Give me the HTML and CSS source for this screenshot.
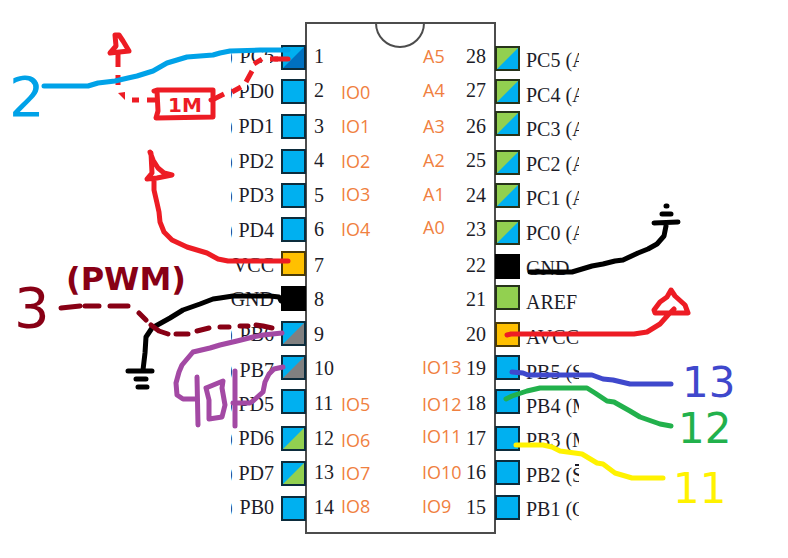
FILE: index.html
```html
<!DOCTYPE html>
<html lang="en">
<head>
<meta charset="utf-8">
<title>Chip pinout wiring</title>
<link rel="stylesheet" href="styles.css">
</head>
<body>
<main class="board">
<svg class="diagram" viewBox="0 0 788 558" role="img" aria-label="28-pin chip with wiring notes">
  <defs>
    <clipPath id="labels-clip"><rect x="231" y="20" width="348" height="520"/></clipPath>
  </defs>

  <!-- chip body -->
  <rect class="body" x="306" y="23" width="189" height="510"/>
  <path class="body" d="M376 23A24 24 0 0 0 424 23"/>

  <!-- pin fills: left column, then right column -->
  <g class="pins blue">
    <rect x="282" y="46" width="23" height="23"/>
    <rect x="282" y="80" width="23" height="23"/>
    <rect x="282" y="115" width="23" height="23"/>
    <rect x="282" y="150" width="23" height="23"/>
    <rect x="282" y="184" width="23" height="23"/>
    <rect x="282" y="218" width="23" height="23"/>
    <rect x="282" y="322" width="23" height="23"/>
    <rect x="282" y="356" width="23" height="23"/>
    <rect x="282" y="390" width="23" height="23"/>
    <rect x="282" y="427" width="23" height="23"/>
    <rect x="282" y="462" width="23" height="23"/>
    <rect x="282" y="497" width="23" height="23"/>
    <rect x="496" y="356" width="23" height="23"/>
    <rect x="496" y="390" width="23" height="23"/>
    <rect x="496" y="427" width="23" height="23"/>
    <rect x="496" y="461" width="23" height="23"/>
    <rect x="496" y="496" width="23" height="23"/>
  </g>
  <g class="pins green">
    <rect x="496" y="47" width="23" height="23"/>
    <rect x="496" y="80" width="23" height="23"/>
    <rect x="496" y="112" width="23" height="23"/>
    <rect x="496" y="151" width="23" height="23"/>
    <rect x="496" y="184" width="23" height="23"/>
    <rect x="496" y="221" width="23" height="23"/>
    <rect x="496" y="286" width="23" height="23"/>
  </g>
  <g class="pins amber">
    <rect x="282" y="252" width="23" height="23"/>
    <rect x="496" y="323" width="23" height="23"/>
  </g>
  <g class="pins black">
    <rect x="282" y="287" width="23" height="23"/>
    <rect x="496" y="255" width="23" height="23"/>
  </g>
  <path class="half navy" d="M304 47V68H283Z"/>
  <path class="half grey" d="M304 323V344H283ZM304 357V378H283Z"/>
  <path class="half lime" d="M304 428V449H283ZM304 463V484H283Z"/>
  <path class="half sky" d="M518 48V69H497ZM518 81V102H497ZM518 113V134H497ZM518 152V173H497ZM518 185V206H497ZM518 222V243H497Z"/>

  <!-- pin names, cut at the edges of the excerpt -->
  <g clip-path="url(#labels-clip)">
    <g class="name">
      <text x="226" y="63">)</text>
      <text x="226" y="98">)</text>
      <text x="226" y="133">)</text>
      <text x="226" y="168">)</text>
      <text x="226" y="202">)</text>
      <text x="226" y="237">)</text>
      <text x="226" y="341">)</text>
      <text x="226" y="377">)</text>
      <text x="226" y="411">)</text>
      <text x="226" y="445">)</text>
      <text x="226" y="480">)</text>
      <text x="226" y="514">)</text>
    </g>
    <g class="name end">
      <text x="274" y="63">PC6</text>
      <text x="274" y="98">PD0</text>
      <text x="274" y="133">PD1</text>
      <text x="274" y="168">PD2</text>
      <text x="274" y="202">PD3</text>
      <text x="274" y="237">PD4</text>
      <text x="274" y="272">VCC</text>
      <text x="274" y="306">GND</text>
      <text x="274" y="341">PB6</text>
      <text x="274" y="377">PB7</text>
      <text x="274" y="411">PD5</text>
      <text x="274" y="445">PD6</text>
      <text x="274" y="480">PD7</text>
      <text x="274" y="514">PB0</text>
    </g>
    <g class="name">
      <text x="526" y="67">PC5 (A</text>
      <text x="526" y="102">PC4 (A</text>
      <text x="526" y="136">PC3 (A</text>
      <text x="526" y="171">PC2 (A</text>
      <text x="526" y="205">PC1 (A</text>
      <text x="526" y="240">PC0 (A</text>
      <text x="526" y="275">GND</text>
      <text x="526" y="309">AREF</text>
      <text x="526" y="344">AVCC</text>
      <text x="526" y="379">PB5 (S</text>
      <text x="526" y="413">PB4 (M</text>
      <text x="526" y="447">PB3 (M</text>
      <text x="526" y="482">PB2 (S</text>
      <text x="526" y="516">PB1 (O</text>
    </g>
    <path class="overbar" d="M575 465H579"/>
  </g>

  <!-- pin numbers -->
  <g class="name">
    <text x="314" y="63">1</text>
    <text x="314" y="97">2</text>
    <text x="314" y="133">3</text>
    <text x="314" y="167">4</text>
    <text x="314" y="202">5</text>
    <text x="314" y="236">6</text>
    <text x="314" y="272">7</text>
    <text x="314" y="306">8</text>
    <text x="314" y="341">9</text>
    <text x="314" y="375">10</text>
    <text x="314" y="410">11</text>
    <text x="314" y="445">12</text>
    <text x="314" y="479">13</text>
    <text x="314" y="514">14</text>
  </g>
  <g class="name end">
    <text x="486" y="63">28</text>
    <text x="486" y="97">27</text>
    <text x="486" y="133">26</text>
    <text x="486" y="167">25</text>
    <text x="486" y="202">24</text>
    <text x="486" y="236">23</text>
    <text x="486" y="272">22</text>
    <text x="486" y="306">21</text>
    <text x="486" y="341">20</text>
    <text x="486" y="375">19</text>
    <text x="486" y="410">18</text>
    <text x="486" y="445">17</text>
    <text x="486" y="479">16</text>
    <text x="486" y="514">15</text>
  </g>

  <!-- board IO names -->
  <g class="io">
    <text x="341" y="99">IO0</text>
    <text x="341" y="133">IO1</text>
    <text x="341" y="168">IO2</text>
    <text x="341" y="201">IO3</text>
    <text x="341" y="236">IO4</text>
    <text x="341" y="411">IO5</text>
    <text x="341" y="447">IO6</text>
    <text x="341" y="480">IO7</text>
    <text x="341" y="513">IO8</text>
    <text x="423" y="63">A5</text>
    <text x="423" y="97">A4</text>
    <text x="423" y="133">A3</text>
    <text x="423" y="167">A2</text>
    <text x="423" y="201">A1</text>
    <text x="423" y="234">A0</text>
    <text x="422" y="374">IO13</text>
    <text x="422" y="411">IO12</text>
    <text x="422" y="443">IO11</text>
    <text x="422" y="479">IO10</text>
    <text x="422" y="513">IO9</text>
  </g>

  <!-- reset pull-up through 1M, and pin 2 wire -->
  <path class="blank" d="M239 79H247V90H239ZM262 55H270V63H262ZM242 70H247V80H242Z"/>
  <g class="wire red">
    <path d="M115 35L116 46L110 53L129 51L123 41L119 35Z"/>
    <path class="flat" d="M118 52V67M118 75V85M132 100H139M147 100H156M214 99L224 94M232 92L241 87M246 82L252 71M254 64L262 59M270 59H278"/>
    <path class="fill" d="M118 93L125 92L125 100Z"/>
    <path d="M154 91L157 90H213V117L156 118L158 111L157 91M211 100L214 99M275 59H288"/>
  </g>
  <path class="wire cyan" d="M44 86H88L98 83L115 81L128 78L137 76L153 71L167 63L177 60L187 57L213 55L220 53L230 51L260 50H288"/>
  <text class="hand hand-large cyan-ink" x="9" y="116">2</text>
  <text class="hand hand-small red-ink" x="168" y="112">1M</text>

  <!-- VCC -->
  <path class="wire red" d="M150 152L153 160L158 168L164 173L172 175L157 178L147 179L152 173L151 153M154 180V190L157 203L159 212L160 222L164 232L172 240L187 247L207 253L218 259L228 261H288"/>

  <!-- ground on pin 8 -->
  <path class="wire ink" d="M281 301L279 297L270 296H233L220 298L213 299L200 304L183 310L170 318L152 328L146 337L145 353L143 370M128 371H152M136 379H146M138 387H147"/>

  <!-- pin 3 wire -->
  <path class="wire maroon" d="M61 308L80 306M85 306H99M110 306H128M139 313L146 320M151 325L159 331L168 334M176 334H188M197 331L209 328M220 327H229M240 326H248M256 325L263 326L272 328"/>
  <text class="hand hand-large maroon-ink" x="14" y="327">3</text>
  <text class="hand hand-medium maroon-ink" x="66" y="290">(PWM)</text>

  <!-- crystal between pins 9 and 10 -->
  <path class="wire purple" d="M282 333L263 335L253 337L237 341L220 345L210 348L193 352L182 365L179 372L176 383L177 395L183 399L197 399M197 377L198 425M206 388L223 381L222 388L225 405L222 417L209 419V400L206 388M235 371V426M233 403H250L253 401L263 392L265 382L269 374L274 369L283 367"/>

  <!-- ground on pin 22 -->
  <path class="wire ink" d="M530 272H572L592 266L603 264L615 261L623 260L638 253L648 249L657 244L664 236L666 226M654 223L678 222M662 214H671M666 206H667"/>

  <!-- AVCC -->
  <path class="wire red" d="M507 335L511 334H634L647 332L660 324L668 315L674 309M671 290L675 296L685 305L688 313H655L654 310L660 302L667 297Z"/>

  <!-- pins 13, 12 and 11 -->
  <path class="wire indigo" d="M512 372L523 373L528 375H592L603 379L613 380L630 384H671"/>
  <text class="hand hand-note indigo-ink" x="682" y="397">13</text>
  <path class="wire leaf" d="M506 399L512 396L527 391L540 388H587L595 393L607 401L614 402L630 411L640 417L660 424L671 426"/>
  <text class="hand hand-note leaf-ink" x="678" y="443">12</text>
  <path class="wire yellow" d="M516 445H543L552 447L560 451L582 454L597 463L603 464L615 473L632 478H663"/>
  <text class="hand hand-note yellow-ink" x="673" y="503">11</text>
</svg>
</main>
</body>
</html>
```
FILE: styles.css
```css
body {
  margin: 0;
  background: #fff;
}

.board {
  width: 100%;
}

.diagram {
  display: block;
  width: 100%;
  height: auto;
}

.body {
  fill: none;
  stroke: #4c4c4c;
  stroke-width: 2;
}

.pins {
  stroke: #0c2c3c;
  stroke-width: 2;
}

.pins.blue { fill: #00b0f0; }
.pins.green { fill: #92d050; stroke: #26331a; }
.pins.amber { fill: #ffc000; stroke: #4a3a08; }
.pins.black { fill: #000; stroke: #000; }

.half.navy { fill: #0070c0; }
.half.grey { fill: #808080; }
.half.lime { fill: #92d050; }
.half.sky { fill: #00b0f0; }

.name {
  font-family: "Liberation Serif", serif;
  font-size: 20px;
  fill: #1c1c28;
}

.end { text-anchor: end; }

.overbar {
  stroke: #1c1c28;
  stroke-width: 2;
}

.io {
  font-family: "Open Sans", sans-serif;
  font-size: 18px;
  fill: #f08040;
}

.blank { fill: #fff; }

.wire {
  fill: none;
  stroke-width: 5;
  stroke-linecap: round;
  stroke-linejoin: round;
}

.wire.red { stroke: #ed1c24; }
.wire.cyan { stroke: #00a2e8; }
.wire.ink { stroke: #000; }
.wire.maroon { stroke: #880015; }
.wire.purple { stroke: #a349a4; }
.wire.indigo { stroke: #3f48cc; }
.wire.leaf { stroke: #22b14c; }
.wire.yellow { stroke: #fff200; }

.flat { stroke-linecap: butt; }
.fill { fill: #ed1c24; stroke: none; }

.hand {
  font-family: "DejaVu Sans", sans-serif;
}

.hand-large { font-size: 56px; }
.hand-note { font-size: 42px; }
.hand-medium { font-size: 32px; font-weight: bold; }
.hand-small { font-size: 20px; font-weight: bold; }

.cyan-ink { fill: #00a2e8; }
.red-ink { fill: #ed1c24; }
.maroon-ink { fill: #880015; }
.indigo-ink { fill: #3f48cc; }
.leaf-ink { fill: #22b14c; }
.yellow-ink { fill: #fff200; }
```
